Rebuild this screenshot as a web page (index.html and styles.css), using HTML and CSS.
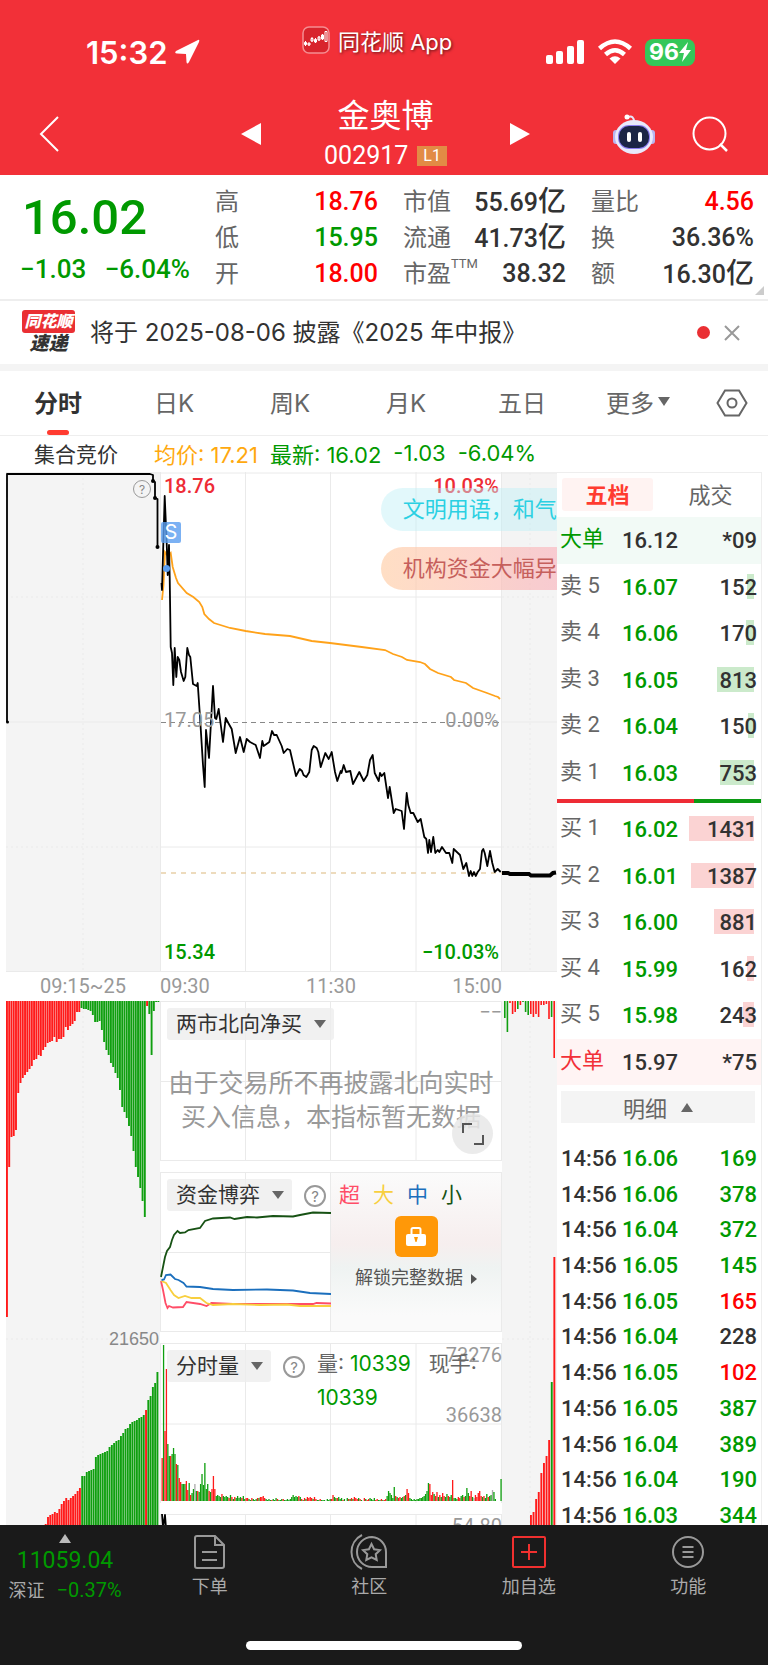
FILE: index.html
```html
<!DOCTYPE html>
<html lang="zh-CN">
  <head>
    <meta charset="UTF-8" />
    <meta name="viewport" content="width=device-width, initial-scale=1.0" />
    <title>金奥博 002917</title>
    <link rel="stylesheet" href="styles.css">
  </head>
  <body>
    <div class="app">
      <header class="header">
        <div class="status">
          <div class="status-time">
            <span>15:32</span>
            <svg width="26" height="26" viewBox="0 0 26 26"><path d="M24 1 L2 12 Q0 14 3 14.500 L12 15 L12.500 23 Q13 26 15 23 L25 3 Q26 0 24 1Z" fill="#fff" /></svg>
          </div>
          <div class="status-app">
            <svg width="28" height="28" viewBox="0 0 28 28">
              <rect x="1" y="1" width="26" height="26" rx="6" fill="#d8242c" stroke="#f58d91" stroke-width="1.500" />
              <g stroke="#fff" fill="#fff" stroke-width="1">
                <path d="M3.500 15v5M7 17v3M10 11v5M13.500 12v5M17 10v5M20.500 8v6" />
                <path d="M2.500 16.500h2v2h-2zM12.500 13.500h2v2.500h-2zM19.500 9h2v4h-2z" />
                <path d="M6 17h2v2h-2zM9 12.500h2v2.500h-2zM16 11h2v3h-2zM23 5.500h2v10h-2z" fill="none" />
              </g>
            </svg>
            <span>同花顺 App</span>
          </div>
          <div class="status-icons">
            <svg width="40" height="26" viewBox="0 0 40 26" fill="#fff">
              <rect x="1" y="16" width="7" height="9" rx="2" />
              <rect x="11" y="12" width="7" height="13" rx="2" />
              <rect x="22" y="7" width="7" height="18" rx="2" />
              <rect x="32" y="1" width="7" height="24" rx="2" />
            </svg>
            <svg width="36" height="26" viewBox="0 0 36 26" fill="none" stroke="#fff" stroke-width="4.500">
              <path d="M2.500 9.500 Q18 -4.500 33.500 9.500" />
              <path d="M8.500 15.500 Q18 7 27.500 15.500" />
              <path d="M18 25 L12.500 19.500 Q18 15 23.500 19.500Z" fill="#fff" stroke="none" />
            </svg>
            <span class="battery">96<svg width="12" height="20" viewBox="0 0 12 20"><path d="M9 0 L0 11 H5 L3 20 L12 8 H7Z" fill="#fff" /></svg></span>
          </div>
        </div>
        <div class="nav">
          <button class="icon-button" aria-label="返回">
            <svg width="22" height="38" viewBox="0 0 22 38"><path d="M20 2 L3 19 L20 36" fill="none" stroke="#fff" stroke-width="2" /></svg>
          </button>
          <button class="icon-button prev" aria-label="上一只">
            <svg width="20" height="22" viewBox="0 0 20 22"><path d="M20 0v22L0 11z" fill="#fff" /></svg>
          </button>
          <div class="nav-title">
            <h1>金奥博</h1>
            <p>002917 <span class="level">L1</span></p>
          </div>
          <button class="icon-button next" aria-label="下一只">
            <svg width="20" height="22" viewBox="0 0 20 22"><path d="M0 0v22l20-11z" fill="#fff" /></svg>
          </button>
          <div class="nav-tools">
            <button class="icon-button" aria-label="智能助手">
              <svg width="44" height="42" viewBox="0 0 44 42">
                <path d="M16 4 Q22 2 22 9" fill="none" stroke="#e6e6fa" stroke-width="2" />
                <circle cx="15" cy="4" r="2.500" fill="#fff" />
                <rect x="1" y="17" width="7" height="14" rx="3" fill="#b9b5ef" />
                <rect x="36" y="17" width="7" height="14" rx="3" fill="#b9b5ef" />
                <ellipse cx="22" cy="24" rx="19" ry="17" fill="#e9e9fb" />
                <rect x="6" y="12" width="32" height="24" rx="11" fill="#8b7df0" />
                <rect x="7" y="13" width="30" height="22" rx="10" fill="#1c2545" />
                <rect x="15" y="19" width="4" height="10" rx="2" fill="#fff" />
                <rect x="26" y="19" width="4" height="10" rx="2" fill="#fff" />
              </svg>
            </button>
            <button class="icon-button" aria-label="搜索">
              <svg width="36" height="38" viewBox="0 0 36 38" fill="none" stroke="#fff" stroke-width="2"><circle cx="17.500" cy="18.500" r="16" /><path d="M28 29l7 7" stroke-width="2.500" /></svg>
            </button>
          </div>
        </div>
      </header>

      <section class="quote">
        <div class="quote-price">
          <strong>16.02</strong>
          <p><span>−1.03</span><span>−6.04%</span></p>
        </div>
        <dl class="quote-list">
          <div><dt>高</dt><dd class="up">18.76</dd></div>
          <div><dt>低</dt><dd class="down">15.95</dd></div>
          <div><dt>开</dt><dd class="up">18.00</dd></div>
        </dl>
        <dl class="quote-list">
          <div><dt>市值</dt><dd>55.69<span>亿</span></dd></div>
          <div><dt>流通</dt><dd>41.73<span>亿</span></dd></div>
          <div><dt>市盈<sup>TTM</sup></dt><dd>38.32</dd></div>
        </dl>
        <dl class="quote-list">
          <div><dt>量比</dt><dd class="up">4.56</dd></div>
          <div><dt>换</dt><dd>36.36%</dd></div>
          <div><dt>额</dt><dd>16.30<span>亿</span></dd></div>
        </dl>
        <span class="quote-corner"></span>
      </section>

      <section class="news">
        <div class="news-logo"><b>同花顺</b><i>速递</i></div>
        <a href="#">将于 2025-08-06 披露《2025 年中报》</a>
        <span class="news-dot"></span>
        <button class="icon-button" aria-label="关闭">
          <svg width="16" height="16" viewBox="0 0 16 16"><path d="M1 1l14 14M15 1L1 15" stroke="#999" stroke-width="2" /></svg>
        </button>
      </section>

      <nav class="tabs">
        <button class="active">分时</button>
        <button>日K</button>
        <button>周K</button>
        <button>月K</button>
        <button>五日</button>
        <button>更多<span class="caret"></span></button>
        <button aria-label="设置">
          <svg width="32" height="28" viewBox="0 0 32 28" fill="none" stroke="#666" stroke-width="2"><path d="M9 1.500h14L30.500 14L23 26.500H9L1.500 14z" /><circle cx="16" cy="14" r="4.500" /></svg>
        </button>
      </nav>

      <div class="summary">
        <span class="summary-name">集合竞价</span>
        <span class="average">均价: 17.21</span>
        <span class="down">最新: 16.02</span>
        <span class="down">-1.03</span>
        <span class="down">-6.04%</span>
      </div>

      <main class="main">
        <div class="charts">
          <div class="column side">
            <div class="price-chart">
              <svg viewBox="6 472 154 500" preserveAspectRatio="none">
                <g class="grid dotted"><path d="M83 473V972M6 597H160M6 847H160" /></g>
                <g class="grid"><path d="M6 473H160M6 722H160M6 971.500H160" /></g>
                <path class="price-line" d="M7 722V474H150L153 475V481L155 482V498L157.500 499V547" />
                <g><circle cx="7.500" cy="722" r="1.500" /><circle cx="153" cy="481" r="2" /><circle cx="155" cy="498" r="2" /><circle cx="157.500" cy="547" r="2" /></g>
              </svg>
              <button class="help corner" aria-label="说明">?</button>
            </div>
            <div class="axis centered"><span>09:15~25</span></div>
            <div class="side-volume">
              <svg viewBox="6 1001 154 524" preserveAspectRatio="none">
                <g class="grid dotted"><path d="M83 1001V1525M6 1339H160" /></g>
                <g id="auction-top"></g>
                <g id="auction-bottom"></g>
              </svg>
              <span class="volume-label">21650</span>
            </div>
          </div>

          <div class="column">
            <div class="price-chart">
              <svg viewBox="160 472 342 500" preserveAspectRatio="none">
                <g class="grid"><path d="M160 473H502M160 597H502M160 847H502M160 971.500H502M160.500 472V972M245.500 472V972M330.500 472V972M416 472V972M501.500 472V972" /></g>
                <path d="M161 722.500H502" stroke="#888" stroke-dasharray="5 4" />
                <path d="M161 873H502" stroke="#e8cfa8" stroke-width="1.500" stroke-dasharray="5 5" />
                <path class="average-line" d="M162 600L163.500 585 165 552 168 556 170.700 553 172.700 567 176 578 178 583 186.700 593 193.300 597 199.300 602 202.300 607 204.300 614 209 619 214 623 230 628 245.700 631 265 634 290 636 311.700 641 330 643 361.700 647 385 650 393 654 402 657 407 660 420 662 425 664 430 669 438 673 451 677 454 680 466 683 473 688 487 693 495 696 498 697 500 699" />
                <path class="price-line" d="M161.500 583L162 590 164.700 496 166.700 543 167.700 575 169 545 169.700 577 170.700 647 172 653 173.300 685 174.700 648 176.300 677 177.700 657 179.300 660 181 672 183.700 681 185.300 677 187.300 648 189 655 190.300 657 193 684 196.700 686 197.700 683 200 717 203 765 204.700 787 206 730 209 758 213 686 215 718 216.300 719 218.700 709 223 742 225.700 718 228.300 723 231.700 729 235.700 753 240 737 243.700 752 246.700 739 250 742 255.700 745 260 758 262.300 741 263.700 746 269.300 742 272 731 274 735 276.700 735 281.700 746 283.700 753 287.300 749 290 750 296 776 299.700 769 302 771 303.500 775 306.300 777 309.300 772 311.700 750 313.700 746 316.700 748 318.300 752 320.700 767 325.300 753 328.700 759 331.700 752 335 772 337.300 781 340.700 771 341.500 773 343.700 765 346 772 350.300 771 353 784 359.300 772 363.700 781 367.300 775 370 760 372.700 755 374.700 773 378.700 781 380 773 381.700 776 384.300 773 388 798 389.700 787 393.700 813 395.700 809 401.700 811 404 829 406.700 793 408.300 805 410.700 813 413.300 813 417.700 822 420.700 819 424.300 837 426.300 839 428 853 429.300 840 431 852 433.300 837 435.300 853 437.700 850 439.300 852 442 847 446 853 449.300 853 452.300 863 453.700 849 460 855 463.300 869 466.300 863 469 876 470.700 871 472.300 876 474 872 475.700 876 477.700 872 480 869 482 851 483.300 849 484.700 853 487.300 866 490 851 492.300 863 494.700 872 497.700 869 500.700 872" />
              </svg>
              <span class="chart-label top left up">18.76</span>
              <span class="chart-label top right up">10.03%</span>
              <span class="chart-label middle left">17.05</span>
              <span class="chart-label middle right">0.00%</span>
              <span class="chart-label bottom left down">15.34</span>
              <span class="chart-label bottom right down">−10.03%</span>
              <div class="sell-mark"><b>S</b></div>
            </div>
            <div class="axis"><span>09:30</span><span>11:30</span><span>15:00</span></div>

            <div class="panel">
              <svg viewBox="0 0 342 160" preserveAspectRatio="none">
                <g class="grid"><path d="M0 .5H342M0 80.500H342M0 159.500H342M.5 0V160M85.500 0V160M170.500 0V160M256 0V160M341.500 0V160" /></g>
              </svg>
              <div class="panel-bar">
                <button class="picker">两市北向净买<span class="caret"></span></button>
                <span class="dashes">−−</span>
              </div>
              <p class="notice">由于交易所不再披露北向实时<br>买入信息，本指标暂无数据</p>
              <button class="expand" aria-label="全屏">
                <svg width="22" height="22" viewBox="0 0 22 22" fill="none" stroke="#555" stroke-width="2"><path d="M1 10V1H10M12 21H21V12" /></svg>
              </button>
            </div>

            <div class="panel">
              <svg viewBox="0 1172 342 160" preserveAspectRatio="none">
                <g class="grid"><path d="M0 1172.500H342M0 1252.500H342M0 1331.500H342M.5 1172V1332M85.500 1172V1332M170.500 1172V1332M341.500 1172V1332" /></g>
                <g class="flow" transform="translate(-160 0)">
                  <path stroke="#ff4d67" d="M161 1281L163 1290 165.500 1303 167.500 1308 169 1306 173 1307.500 183 1307 186.500 1302 200 1304 206.500 1306 211.500 1303 233 1304 313 1304 316.500 1303 331 1303.500" />
                  <path stroke="#f8cf3e" d="M161.500 1281L166 1283 170.500 1290 174 1295 178.500 1298 185 1296 191.500 1298 200 1298 206.500 1303 213 1305 233 1304 260 1305 287 1304.500 300 1306 331 1306" />
                  <path stroke="#1b6fbd" d="M161.500 1280L164 1279.500 166 1275 170.500 1274.500 175 1279 178.500 1280 183.500 1283 186.500 1286.500 200 1287 213 1289 233 1290 267 1289.500 293 1290.500 310 1293 331 1294" />
                  <path stroke="#175214" d="M161 1277L163 1267 165 1257 167 1251 170 1247 172 1240 174 1235 177.500 1231 180 1233 185 1232.500 188.500 1230 200 1228 205 1221 213 1218.500 230 1217.500 234.500 1219 247 1217 257 1217.500 273 1216 293 1216.500 300 1215 313 1212.500 331 1213" />
                </g>
              </svg>
              <div class="lock">
                <button class="lock-icon" aria-label="解锁">
                  <svg width="22" height="20" viewBox="0 0 22 20"><path d="M6.500 8V2.500Q6.500 1 8 1h6q1.500 0 1.500 1.500V8" fill="none" stroke="#fff" stroke-width="2" /><rect x="1" y="7" width="20" height="12" rx="2" fill="#fff" /><path d="M9 10h4l-1.500 5h-1z" fill="#ff9800" /></svg>
                </button>
                <a href="#">解锁完整数据<span></span></a>
              </div>
              <div class="panel-bar">
                <button class="picker">资金博弈<span class="caret"></span></button>
                <button class="help" aria-label="说明">?</button>
                <div class="legend">
                  <span class="xl">超</span><span class="l">大</span><span class="m">中</span><span class="s">小</span>
                </div>
              </div>
            </div>

            <div class="panel">
              <svg viewBox="160 1343 342 160" preserveAspectRatio="none">
                <g class="grid"><path d="M160 1343.500H502M160 1424H502M160.500 1343V1503M245.500 1343V1503M330.500 1343V1503M416 1343V1503M501.500 1343V1503" /></g>
                <g id="minute-volume"></g>
              </svg>
              <span class="scale scale-top">73276</span>
              <span class="scale scale-middle">36638</span>
              <div class="panel-bar">
                <button class="picker">分时量<span class="caret"></span></button>
                <button class="help" aria-label="说明">?</button>
                <p class="volume-text"><span>量: <b>10339</b></span> <span class="hand">现手:</span> <b>10339</b></p>
              </div>
            </div>

            <div class="panel">
              <svg viewBox="0 0 342 160" preserveAspectRatio="none">
                <g class="grid"><path d="M0 .5H342M.5 0V160M85.500 0V160M170.500 0V160M256 0V160M341.500 0V160" /></g>
                <path class="price-line" d="M2 0L3 14 5 1 6 14" />
              </svg>
              <span class="scale scale-top">54.80</span>
            </div>
          </div>

          <div class="column side">
            <div class="price-chart">
              <svg viewBox="502 472 55 500" preserveAspectRatio="none">
                <g class="grid dotted"><path d="M530 473V972M502 597H557M502 847H557" /></g>
                <g class="grid"><path d="M502 473H557M502 722H557M502 971.500H557" /></g>
                <path class="closing-line" d="M502 873L508 873 510 874 529 874 531 875.500 550 875.500 553 873 556 872.500" />
              </svg>
            </div>
            <div class="axis"></div>
            <div class="side-volume">
              <svg viewBox="502 1001 55 524" preserveAspectRatio="none">
                <g class="grid dotted"><path d="M530 1001V1525M502 1339H557" /></g>
                <g id="after-top"></g>
                <g id="after-bottom"></g>
              </svg>
            </div>
          </div>

          <div class="comment calm">文明用语，和气生财</div>
          <div class="comment alert">机构资金大幅异动</div>
        </div>

        <aside class="book">
          <div class="book-tabs">
            <button class="active">五档</button>
            <button>成交</button>
          </div>
          <table class="levels sell">
            <tr class="big"><th>大单</th><td>16.12</td><td>*09</td></tr>
            <tr><th>卖 5</th><td>16.07</td><td><i style="width: 7px"></i><span>152</span></td></tr>
            <tr><th>卖 4</th><td>16.06</td><td><i style="width: 8px"></i><span>170</span></td></tr>
            <tr><th>卖 3</th><td>16.05</td><td><i style="width: 37px"></i><span>813</span></td></tr>
            <tr><th>卖 2</th><td>16.04</td><td><i style="width: 6px"></i><span>150</span></td></tr>
            <tr><th>卖 1</th><td>16.03</td><td><i style="width: 34px"></i><span>753</span></td></tr>
          </table>
          <div class="ratio"><span style="width: 67%"></span></div>
          <table class="levels buy">
            <tr><th>买 1</th><td>16.02</td><td><i style="width: 65px"></i><span>1431</span></td></tr>
            <tr><th>买 2</th><td>16.01</td><td><i style="width: 63px"></i><span>1387</span></td></tr>
            <tr><th>买 3</th><td>16.00</td><td><i style="width: 40px"></i><span>881</span></td></tr>
            <tr><th>买 4</th><td>15.99</td><td><i style="width: 7px"></i><span>162</span></td></tr>
            <tr><th>买 5</th><td>15.98</td><td><i style="width: 11px"></i><span>243</span></td></tr>
            <tr class="big"><th>大单</th><td>15.97</td><td>*75</td></tr>
          </table>
          <button class="details">明细<span class="caret up-caret"></span></button>
          <table class="ticks">
            <tr><td>14:56</td><td>16.06</td><td class="down">169</td></tr>
            <tr><td>14:56</td><td>16.06</td><td class="down">378</td></tr>
            <tr><td>14:56</td><td>16.04</td><td class="down">372</td></tr>
            <tr><td>14:56</td><td>16.05</td><td class="down">145</td></tr>
            <tr><td>14:56</td><td>16.05</td><td class="up">165</td></tr>
            <tr><td>14:56</td><td>16.04</td><td>228</td></tr>
            <tr><td>14:56</td><td>16.05</td><td class="up">102</td></tr>
            <tr><td>14:56</td><td>16.05</td><td class="down">387</td></tr>
            <tr><td>14:56</td><td>16.04</td><td class="down">389</td></tr>
            <tr><td>14:56</td><td>16.04</td><td class="down">190</td></tr>
            <tr><td>14:56</td><td>16.03</td><td class="down">344</td></tr>
          </table>
        </aside>
      </main>

      <footer class="footer">
        <div class="toolbar">
          <button class="index">
            <span class="caret up-caret"></span>
            <b>11059.04</b>
            <span class="index-row">深证<em>−0.37%</em></span>
          </button>
          <button>
            <svg width="34" height="36" viewBox="0 0 34 36" fill="none" stroke="#999" stroke-width="2"><path d="M4 2H22L31 11V32Q31 34 29 34H4Q2 34 2 32V4Q2 2 4 2ZM22 2V11H31M9 18H24M9 26H24" /></svg>
            下单
          </button>
          <button>
            <svg width="38" height="36" viewBox="0 0 38 36" fill="none" stroke="#999" stroke-width="2"><path d="M22 3A15 15 0 0 1 36 18V33H22A15 15 0 0 1 22 3ZM12 1A19 19 0 0 0 12 35" /><path d="M21.500 10l2.600 5.300 5.800.8-4.200 4.100 1 5.800-5.200-2.700-5.200 2.700 1-5.800-4.200-4.100 5.800-.8z" /></svg>
            社区
          </button>
          <button>
            <svg width="36" height="36" viewBox="0 0 36 36" fill="none" stroke="#f0302f" stroke-width="2"><rect x="2" y="3" width="32" height="30" rx="1" /><path d="M18 10V26M10 18H26" /></svg>
            加自选
          </button>
          <button>
            <svg width="34" height="36" viewBox="0 0 34 36" fill="none" stroke="#999" stroke-width="2"><circle cx="17" cy="18" r="15" /><path d="M11.500 13H22.500M11.500 18H22.500M11.500 23H22.500" /></svg>
            功能
          </button>
        </div>
        <div class="home-bar"></div>
      </footer>
    </div>
    <script src="script.js"></script>
  </body>
</html>
```
FILE: styles.css
```css
* {
  box-sizing: border-box;
}
body {
  margin: 0;
  font-family: Inter, "Noto Sans CJK SC", sans-serif;
  font-size: 22px;
  color: #323232;
  background-color: #fff;
}
h1, p, dl, dd {
  margin: 0;
}
button {
  padding: 0;
  border: none;
  background: none;
  font: inherit;
  color: inherit;
  cursor: pointer;
}
a {
  color: inherit;
  text-decoration: none;
}
svg {
  display: block;
}
.app {
  display: flex;
  flex-direction: column;
  height: 100vh;
}
.up {
  color: #f00;
}
.down {
  color: #090;
}
.icon-button {
  display: flex;
  align-items: center;
}
.caret {
  display: inline-block;
  border: 6px solid transparent;
  border-top: 9px solid #666;
  border-bottom: none;
}
.up-caret {
  border-top: none;
  border-bottom: 9px solid #666;
}

/* header */
.header {
  height: 175px;
  background-color: #f23038;
  color: #fff;
}
.status {
  display: grid;
  grid-template-columns: 216px auto 1fr;
  height: 90px;
  padding: 0 73px 0 86px;
}
.status-time {
  display: flex;
  align-items: center;
  gap: 6px;
  padding-top: 14px;
  font-size: 31px;
  font-weight: 600;
}
.status-app {
  display: flex;
  align-items: center;
  gap: 8px;
  padding-bottom: 11px;
  font-size: 22px;
  text-shadow: 1px 1px 3px rgba(0, 0, 0, 0.6);
}
.status-icons {
  display: flex;
  align-items: center;
  justify-content: flex-end;
  gap: 12px;
  padding-top: 14px;
}
.battery {
  display: flex;
  align-items: center;
  justify-content: center;
  width: 50px;
  height: 27px;
  border-radius: 8px;
  background-color: #34c759;
  font-size: 23px;
  font-weight: 700;
}
.nav {
  display: grid;
  grid-template-columns: 203px 20px 1fr 20px 198px;
  align-items: center;
  height: 84px;
  padding: 4px 40px 0 38px;
}
.nav .prev {
  justify-self: end;
}
.nav-title {
  text-align: center;
}
.nav-title h1 {
  font-size: 32px;
  font-weight: 400;
  line-height: 44px;
}
.nav-title p {
  display: flex;
  align-items: center;
  justify-content: center;
  gap: 9px;
  font-family: Roboto, sans-serif;
  font-size: 25px;
  line-height: 36px;
}
.level {
  padding: 0 6px;
  background-color: #e28b45;
  font-size: 16px;
  line-height: 20px;
}
.nav-tools {
  display: flex;
  justify-content: flex-end;
  align-items: center;
  gap: 36px;
}

/* quote */
.quote {
  position: relative;
  display: grid;
  grid-template-columns: 170px 163px 163px 163px;
  justify-content: space-between;
  height: 126px;
  padding: 9px 14px 0 20px;
  border-bottom: 2px solid #eee;
  font-family: Roboto, "Noto Sans CJK SC", sans-serif;
}
.quote-price {
  color: #090;
}
.quote-price strong {
  display: block;
  padding-left: 2px;
  font-size: 49px;
  font-weight: 500;
  line-height: 68px;
}
.quote-price p {
  display: flex;
  justify-content: space-between;
  font-size: 26px;
  font-weight: 500;
  line-height: 34px;
}
.quote-list div {
  display: flex;
  justify-content: space-between;
  height: 36px;
  line-height: 36px;
}
.quote-list dt {
  font-size: 24px;
  color: #666;
  white-space: nowrap;
}
.quote-list sup {
  font-size: 13px;
  line-height: 1;
  vertical-align: 14px;
}
.quote-list dd {
  font-size: 25px;
  font-weight: 500;
  white-space: nowrap;
}
.quote-list dd span {
  font-size: 28px;
}
.quote-corner {
  position: absolute;
  right: 4px;
  bottom: 4px;
  border-left: 9px solid transparent;
  border-bottom: 9px solid #ccc;
}

/* news */
.news {
  display: flex;
  align-items: center;
  height: 63px;
  padding: 0 28px 0 22px;
}
.news-logo {
  width: 53px;
  margin-right: 15px;
  font-size: 17px;
  font-style: italic;
  font-weight: 900;
  text-align: center;
}
.news-logo b {
  display: block;
  height: 23px;
  border-radius: 3px;
  background-color: #ea2f33;
  color: #fff;
  font-size: 16px;
  line-height: 22px;
}
.news-logo i {
  display: block;
  font-size: 19px;
  line-height: 22px;
}
.news a {
  flex: 1;
  padding-bottom: 4px;
  font-size: 24px;
}
.news-dot {
  width: 13px;
  height: 13px;
  margin-right: 14px;
  border-radius: 50%;
  background-color: #ea2f33;
}

/* tabs */
.tabs {
  display: grid;
  grid-template-columns: repeat(6, 29fr) 18fr;
  height: 72px;
  border-top: 7px solid #f4f4f4;
  border-bottom: 1px solid #eee;
}
.tabs button {
  position: relative;
  display: flex;
  align-items: center;
  justify-content: center;
  gap: 4px;
  padding-bottom: 4px;
  font-size: 24px;
  color: #666;
}
.tabs button:last-child {
  padding-bottom: 0;
}
.tabs .active {
  font-weight: 700;
  color: #323232;
}
.tabs .active::after {
  content: "";
  position: absolute;
  left: calc(50% - 11px);
  bottom: 0;
  width: 22px;
  height: 5px;
  border-radius: 3px;
  background-color: #ff3b30;
}
.summary {
  display: flex;
  align-items: center;
  gap: 12px;
  height: 36px;
  padding: 0 0 3px 34px;
  font-size: 22px;
}
.summary-name {
  margin-right: 24px;
  font-size: 21px;
}
.average {
  color: #ffa90f;
}

/* charts */
.main {
  display: grid;
  grid-template-columns: 551fr 205fr;
  grid-template-rows: minmax(0, 1fr);
  flex: 1;
  min-height: 0;
  padding: 0 6px;
  overflow: hidden;
}
.charts {
  position: relative;
  display: grid;
  grid-template-columns: 154fr 342fr 55fr;
  grid-template-rows: minmax(0, 1fr);
  min-height: 0;
  overflow: hidden;
}
.column {
  display: flex;
  flex-direction: column;
  min-width: 0;
  min-height: 0;
}
.price-chart {
  position: relative;
  flex: none;
  height: 500px;
}
.side .price-chart,
.side-volume {
  background-color: #f4f4f4;
}
.side-volume {
  position: relative;
  flex: 1;
  min-height: 0;
}
.price-chart > svg,
.side-volume > svg,
.panel > svg {
  width: 100%;
  height: 100%;
}
.grid path {
  fill: none;
  stroke: #eaeaea;
}
.dotted path {
  stroke-dasharray: 2 3;
}
.price-line {
  fill: none;
  stroke: #000;
  stroke-width: 1.8;
  stroke-linejoin: round;
}
.average-line {
  fill: none;
  stroke: #ffa21a;
  stroke-width: 1.8;
}
.closing-line {
  fill: none;
  stroke: #000;
  stroke-width: 4;
}
.flow path {
  fill: none;
  stroke-width: 1.8;
}
.chart-label {
  position: absolute;
  font-family: Roboto, sans-serif;
  font-size: 20px;
  line-height: 24px;
  color: #999;
}
.chart-label.up {
  color: #ee2c35;
}
.chart-label.down {
  color: #090;
}
.chart-label.left {
  left: 4px;
}
.chart-label.right {
  right: 3px;
}
.chart-label.top {
  top: 2px;
}
.chart-label.middle {
  top: 236px;
}
.chart-label.bottom {
  bottom: 8px;
}
.chart-label.top,
.chart-label.bottom {
  font-weight: 500;
}
.sell-mark {
  position: absolute;
  top: 50px;
  left: 1px;
  width: 20px;
  height: 21px;
  border-radius: 2px;
  background-color: rgba(90, 158, 240, 0.8);
  color: #fff;
  font-size: 20px;
  line-height: 21px;
  text-align: center;
}
.sell-mark b {
  font-weight: 400;
}
.sell-mark::after {
  content: "";
  position: absolute;
  left: 2px;
  top: 43px;
  width: 7px;
  height: 7px;
  border-radius: 50%;
  background-color: #5a9ef0;
}
.help {
  flex: none;
  width: 22px;
  height: 22px;
  border: 2px solid #999;
  border-radius: 50%;
  color: #888;
  font-size: 15px;
  line-height: 17px;
}
.help.corner {
  position: absolute;
  top: 8px;
  right: 9px;
  width: 18px;
  height: 18px;
  border-width: 1px;
  font-size: 12px;
  line-height: 15px;
}
.axis {
  display: flex;
  flex: none;
  justify-content: space-between;
  height: 29px;
  background-color: #fff;
  color: #999;
  font-family: Roboto, sans-serif;
  font-size: 20px;
  line-height: 29px;
}
.axis.centered {
  justify-content: center;
}
.volume-label {
  position: absolute;
  top: 327px;
  right: 1px;
  color: #888;
  font-family: "Liberation Sans", sans-serif;
  font-size: 18px;
  line-height: 22px;
}
.panel {
  position: relative;
  flex: none;
  height: 160px;
  margin-bottom: 11px;
}
.panel-bar {
  position: absolute;
  top: 7px;
  left: 7px;
  right: 0;
  display: flex;
  align-items: flex-start;
}
.panel-bar .help {
  margin: 6px 0 0 12px;
}
.picker {
  flex: none;
  height: 32px;
  padding: 0 8px 0 9px;
  border-radius: 3px;
  background-color: rgba(238, 238, 238, 0.8);
  font-size: 21px;
  line-height: 32px;
}
.picker .caret {
  margin-left: 12px;
  border-top-width: 8px;
  vertical-align: 3px;
}
.dashes {
  flex: 1;
  color: #999;
  font-family: Roboto, sans-serif;
  font-size: 20px;
  line-height: 8px;
  text-align: right;
}
.notice {
  position: absolute;
  top: 65px;
  left: 0;
  right: 0;
  color: #999;
  font-size: 25px;
  line-height: 34px;
  text-align: center;
  white-space: nowrap;
}
.expand {
  position: absolute;
  right: 9px;
  bottom: 7px;
  display: flex;
  align-items: center;
  justify-content: center;
  width: 41px;
  height: 41px;
  border-radius: 50%;
  background-color: rgba(232, 232, 232, 0.85);
}
.legend {
  display: flex;
  gap: 13px;
  margin-left: 13px;
  font-size: 21px;
  line-height: 32px;
}
.xl {
  color: #ff4d67;
}
.l {
  color: #f8cf3e;
}
.m {
  color: #1b6fbd;
}
.s {
  color: #175214;
}
.lock {
  position: absolute;
  top: 1px;
  bottom: 1px;
  left: 50%;
  right: 1px;
  display: flex;
  flex-direction: column;
  align-items: center;
  padding-top: 43px;
  background: linear-gradient(#fbfbfb, #f6eeee 45%, #eff3f2 60%, #fafafa 90%);
}
.lock-icon {
  display: flex;
  align-items: center;
  justify-content: center;
  width: 43px;
  height: 41px;
  border-radius: 6px;
  background-color: #ff9808;
}
.lock a {
  margin-top: 8px;
  color: #555;
  font-size: 18px;
  line-height: 26px;
  white-space: nowrap;
}
.lock a span {
  display: inline-block;
  margin-left: 8px;
  border: 5px solid transparent;
  border-left: 6px solid #555;
  border-right: none;
}
.scale {
  position: absolute;
  right: 0;
  color: #999;
  font-family: Roboto, sans-serif;
  font-size: 20px;
  line-height: 24px;
}
.scale-top {
  top: 0;
}
.scale-middle {
  top: 60px;
}
.volume-text {
  margin-left: 12px;
  color: #666;
  font-size: 21px;
  line-height: 34px;
}
.volume-text b {
  color: #090;
  font-weight: 400;
}
.volume-text .hand {
  margin-left: 12px;
}
.panel-bar .volume-text {
  margin-top: -3px;
}
.comment {
  position: absolute;
  left: 68%;
  right: 0;
  height: 43px;
  padding-left: 22px;
  border-radius: 22px 0 0 22px;
  font-size: 22px;
  line-height: 43px;
  white-space: nowrap;
  overflow: hidden;
}
.calm {
  top: 16px;
  background-color: rgba(190, 240, 246, 0.45);
  color: #2bd0e2;
}
.alert {
  top: 75px;
  background: linear-gradient(90deg, rgba(255, 205, 165, 0.65), rgba(250, 175, 185, 0.6));
  color: #c65f5c;
}

/* order book */
.book {
  border-right: 1px solid #eee;
  border-top: 1px solid #eee;
  font-size: 22px;
}
.book-tabs {
  display: grid;
  grid-template-columns: 1fr 1fr;
  gap: 12px;
  height: 44px;
  padding: 5px 5px 6px 5px;
}
.book-tabs button {
  border-radius: 3px;
  color: #666;
  line-height: 32px;
}
.book-tabs .active {
  background-color: #fff3f2;
  color: #ff3b30;
  font-weight: 700;
}
.levels,
.ticks {
  width: 100%;
  border-collapse: collapse;
  table-layout: fixed;
  font-family: Roboto, "Noto Sans CJK SC", sans-serif;
  font-size: 22px;
  font-weight: 500;
  line-height: 26px;
}
.levels {
  height: 279px;
}
.levels th {
  width: 61px;
  padding: 0 0 2px 3px;
  color: #666;
  font-weight: 400;
  text-align: left;
}
.levels td,
.ticks td {
  padding: 2px 0 0 4px;
}
.levels td:last-child,
.ticks td:last-child {
  position: relative;
  padding: 2px 4px 0 0;
  text-align: right;
}
.levels td:nth-child(2),
.ticks td:nth-child(2) {
  width: 66px;
  color: #090;
}
.levels td i {
  position: absolute;
  top: 10px;
  right: 7px;
  height: 25px;
  background-color: #cbeacb;
}
.levels td span {
  position: relative;
}
.buy td i {
  background-color: #fbd3d3;
}
.levels .big td:nth-child(2) {
  color: #323232;
}
.sell .big {
  background-color: #f2faf6;
}
.sell .big th {
  color: #090;
}
.buy .big {
  background-color: #fff4f4;
}
.buy .big th {
  color: #f23038;
}
.ratio {
  height: 4px;
  margin: 3px 0;
  background-color: #0c9a14;
}
.ratio span {
  display: block;
  height: 4px;
  background-color: #ee2c35;
}
.details {
  display: flex;
  align-items: center;
  justify-content: center;
  gap: 14px;
  width: calc(100% - 10px);
  height: 32px;
  margin: 6px 5px 17px 4px;
  background-color: #f4f4f4;
  color: #666;
}
.ticks {
  height: 393px;
}
.ticks td:first-child {
  width: 61px;
}

/* footer */
.footer {
  height: 140px;
  background-color: #1a1a1a;
  color: #aaa;
}
.toolbar {
  display: grid;
  grid-template-columns: 130px 1fr 1fr 1fr 1fr;
  height: 116px;
}
.toolbar button {
  display: flex;
  flex-direction: column;
  align-items: center;
  padding-top: 9px;
  gap: 2px;
  font-size: 18px;
}
.index b {
  color: #090;
  font-family: Roboto, sans-serif;
  font-size: 23px;
  font-weight: 400;
  line-height: 32px;
}
.index .up-caret {
  border-bottom-color: #bbb;
}
.index-row {
  line-height: 22px;
}
.index em {
  margin-left: 12px;
  color: #090;
  font-family: Roboto, sans-serif;
  font-size: 20px;
  font-style: normal;
}
.home-bar {
  width: 36%;
  height: 9px;
  margin: 0 auto;
  border-radius: 5px;
  background-color: #fff;
}
```
FILE: script.js
```js
const COLORS = { r: "#ff1a1a", g: "#0f9f0f", x: "#aaaaaa" };

// "12r 8g" -> one bar per item: height and colour
function drawBars(id, data, x, step, width, base, down) {
  const group = document.getElementById(id);
  data.trim().split(/\s+/).forEach(function (item, i) {
    const height = parseInt(item);
    if (!height) return;
    const bar = document.createElementNS("http://www.w3.org/2000/svg", "rect");
    bar.setAttribute("x", x + i * step);
    bar.setAttribute("y", down ? base : base - height);
    bar.setAttribute("width", width);
    bar.setAttribute("height", height);
    bar.setAttribute("fill", COLORS[item.slice(-1)]);
    group.appendChild(bar);
  });
}

drawBars("auction-top", `316r 166r 136r 135r 129r 92r 82r 77r 74r 71r 68r 65r 59r 58r 54r 55r 49r
  46r 42r 41r 40r 36r 41r 38r 38r 36r 26r 29r 25r 23r 20r 11r 11r
  7g 8g 8g 9g 10g 14g 21g 21g 20g 29g 41g 49g 54g 62g 66g 72g 77g 89g 106g 111g 117g
  125g 135g 150g 166g 176g 187g 200g 216g 5r 13g 54g 10g 1g 1g`, 6, 2.26, 1.9, 1001, true);

drawBars("auction-bottom", `0r 0r 0r 0r 0r 0r 0r 0r 0r 0r 0r 0r 0r 0r 0r 0r 0r 1r
  8r 10r 11r 13r 12r 16r 21r 24r 27r 25r 27r 29r 31r 34r 37r
  49g 49g 53g 54g 55g 56g 68g 70g 71g 72g 73g 74g 78g 80g 82g 84g 85g 89g 92g 96g 97g
  101g 103g 104g 105g 107g 108g 110g 115r 125g 129g 138g 142g 153g`, 6, 2.28, 1.9, 1525, false);

drawBars("after-top", `17g 31g 2r 13r 11r 8g 4r 1g 11g 14g 13r 16r 13r 16r 4r 4r 3r 18r 16g 57r`,
  504, 2.6, 1.6, 1001, true);

drawBars("after-bottom", `10r 13r 26r 33r 52r 62r 69r 85r 143g 268r`, 530, 2.6, 1.9, 1525, false);

drawBars("minute-volume", `43r 156g 70r 132r 57g 45g 45r 47g 53g 47g 37r 36g 23r 19r 17g 17g 17g 20r 11r 18g
  6r 8g 12g 17x 10g 10r 9g 17g 27g 16g 38g 12g 17g 10r 9g 12r 25r 12r 5g 6g
  5g 4g 7r 5g 4g 5g 4g 3r 6g 4r 2g 4r 3g 5g 3g 4g 3r 5g 2g 3r
  3r 2g 1g 3r 2g 1g 2g 3r 3g 4r 4r 5r 3r 2g 1g 2g 1g 1r 2g 1g
  3g 2r 1g 1g 2g 2r 1g 1g 2g 1g 2g 4g 6g 4g 5g 4g 5r 4g 2r 1g
  3r 2g 4r 3r 4r 3r 2g 4r 2r 1g 1g 2r 1g 1g 1g 0g 2g 1g 2g 2r
  6r 4g 3g 3r 4g 2g 3g 1r 2g 0g 3g 2r 2g 3r 2g 4r 3r 2r 3g 2r
  1g 0g 3r 2g 1r 2r 3g 2g 1g 3g 1r 2r 1g 1g 2r 1g 1r 2r 5g 10g
  8g 6g 3g 14g 5r 4g 3r 4r 3g 4g 5r 6g 12r 8r 3g 2g 1g 2g 1g 2g
  2g 3g 3g 4g 5g 7g 10g 18g 17r 6r 9r 7g 5r 9r 4g 6r 4g 8r 5r 4g
  7g 5r 4g 6g 21r 3g 3g 2g 4r 3r 5g 6g 4r 5g 13g 8g 5r 10r 4g 3x
  6r 4r 8r 10r 5r 4g 5r 3g 7g 4r 5g 6g 11x 9g 2g 0g 0g 0g 22g`, 161.5, 1.424, 1.3, 1501, false);
```
